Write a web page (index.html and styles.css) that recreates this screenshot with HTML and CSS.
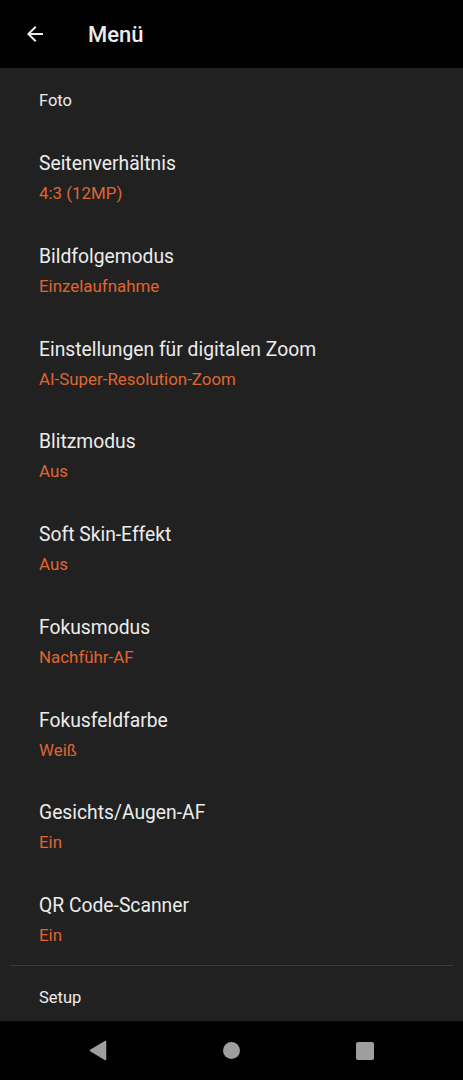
FILE: index.html
```html
<!DOCTYPE html>
<html>
  <head>
    <meta charset="UTF-8" />
    <title>Menü</title>
    <link rel="stylesheet" href="styles.css">
  </head>
  <body>
    <div class="header">
      <svg class="back" width="24" height="24" viewBox="0 0 24 24">
        <path d="M20 11H7.83l5.59-5.59L12 4l-8 8 8 8 1.41-1.41L7.83 13H20v-2z" fill="#ececec"/>
      </svg>
      <span class="title">Menü</span>
    </div>

    <div class="content">
      <div class="section">Foto</div>
      <ul class="list">
        <li><div class="name">Seitenverhältnis</div><div class="value">4:3 (12MP)</div></li>
        <li><div class="name">Bildfolgemodus</div><div class="value">Einzelaufnahme</div></li>
        <li><div class="name">Einstellungen für digitalen Zoom</div><div class="value">AI-Super-Resolution-Zoom</div></li>
        <li><div class="name">Blitzmodus</div><div class="value">Aus</div></li>
        <li><div class="name">Soft Skin-Effekt</div><div class="value">Aus</div></li>
        <li><div class="name">Fokusmodus</div><div class="value">Nachführ-AF</div></li>
        <li><div class="name">Fokusfeldfarbe</div><div class="value">Weiß</div></li>
        <li><div class="name">Gesichts/Augen-AF</div><div class="value">Ein</div></li>
        <li><div class="name">QR Code-Scanner</div><div class="value">Ein</div></li>
      </ul>
      <div class="divider"></div>
      <div class="section setup">Setup</div>
    </div>

    <div class="nav">
      <svg width="18" height="21" viewBox="0 0 18 21"><path d="M16.5 1.5 L16.5 19.5 L1.5 10.5 Z" fill="#9e9e9e" stroke="#9e9e9e" stroke-width="1.5" stroke-linejoin="round"/></svg>
      <span class="home"></span>
      <span class="recent"></span>
    </div>
  </body>
</html>
```

FILE: styles.css
```css
body {
  margin: 0;
  background: #000000;
  font-family: Roboto, "Liberation Sans", sans-serif;
  color: #ececec;
}

.header {
  height: 68px;
  display: flex;
  align-items: center;
  background: #000000;
}

.back {
  margin-left: 23px;
}

.title {
  margin-left: 41px;
  font-size: 22px;
  font-weight: 500;
}

.content {
  height: 953px;
  overflow: hidden;
  background: #212121;
}

.section {
  height: 59px;
  padding: 3px 0 0 39px;
  font-size: 16.5px;
  line-height: 59px;
}

.setup {
  height: auto;
  padding-top: 21px;
  line-height: 22px;
}

.list {
  margin: 0;
  padding: 0;
  list-style: none;
}

.list li {
  height: 92.75px;
  box-sizing: border-box;
  padding: 22px 0 0 39px;
}

.name {
  font-size: 19.3px;
  line-height: 24px;
}

.value {
  margin-top: 6px;
  font-size: 16.9px;
  line-height: 22px;
  color: #e0652f;
}

.divider {
  height: 1px;
  margin: 0 10px;
  background: #3a3a3a;
}

.nav {
  height: 59px;
  display: flex;
  align-items: center;
  justify-content: center;
  gap: 116px;
}

.home {
  width: 17px;
  height: 17px;
  border-radius: 50%;
  background: #9e9e9e;
}

.recent {
  width: 18px;
  height: 18px;
  border-radius: 2px;
  background: #9e9e9e;
}
```
